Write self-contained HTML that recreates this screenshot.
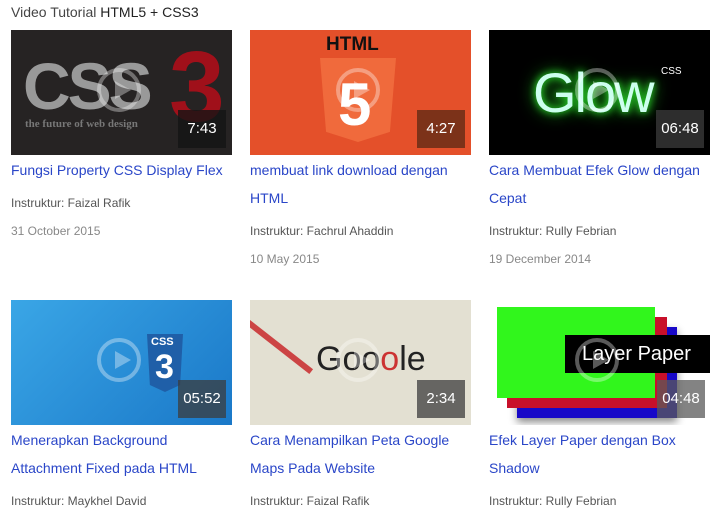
<!DOCTYPE html>
<html><head><style>
body{margin:0;background:#fff;font-family:"Liberation Sans",sans-serif;width:721px;height:519px;overflow:hidden;position:relative}
.h{position:absolute;left:11px;top:4px;font-size:14px;color:#444}
.c{position:absolute;width:221px}
.t{position:relative;width:221px;height:125px;overflow:hidden}
.d{position:absolute;right:6px;bottom:7px;width:48px;height:38px;background:rgba(60,60,60,.75);color:#fff;font-size:15px;text-align:center;line-height:38px}
.p{position:absolute;left:86px;top:38px;width:44px;height:44px;border:4px solid rgba(255,255,255,.35);border-radius:50%;box-sizing:border-box}
.p:after{content:"";position:absolute;left:14px;top:9px;border-left:16px solid rgba(255,255,255,.35);border-top:9px solid transparent;border-bottom:9px solid transparent}
.ti{font-size:14px;color:#2a46c8;line-height:28px;margin-top:1px}
.i{font-size:12px;color:#555;margin-top:5px;line-height:28px}
.dt{font-size:12px;color:#888;line-height:28px}
</style></head><body>
<div class="h">Video Tutorial <span style="color:#222">HTML5 + CSS3</span></div>

<div class="c" style="left:11px;top:30px">
<div class="t" style="background:#262323">
<div style="position:absolute;left:12px;top:18px;font:bold 66px 'Liberation Sans',sans-serif;color:#999;letter-spacing:-3px">CSS</div>
<div style="position:absolute;left:158px;top:0px;font:bold 100px 'Liberation Sans',sans-serif;color:#a0101a">3</div>
<div style="position:absolute;left:14px;top:88px;font:bold 11px 'Liberation Serif',serif;color:#777">the future of web design</div>
<div class="p"></div><div class="d" style="background:rgba(20,20,20,.8)">7:43</div></div>
<div class="ti">Fungsi Property CSS Display Flex</div>
<div class="i">Instruktur: Faizal Rafik</div><div class="dt">31 October 2015</div></div>

<div class="c" style="left:250px;top:30px">
<div class="t" style="background:#e4502a">
<div style="position:absolute;left:76px;top:4px;font:bold 19px 'Liberation Sans',sans-serif;color:#111">HTML</div>
<div style="position:absolute;left:70px;top:28px;width:76px;height:84px;background:#f06a3c;clip-path:polygon(0 0,100% 0,92% 88%,50% 100%,8% 88%)"></div>
<div style="position:absolute;left:88px;top:40px;font:bold 60px 'Liberation Sans',sans-serif;color:#fff">5</div>
<div class="p"></div><div class="d" style="background:rgba(90,40,20,.75)">4:27</div></div>
<div class="ti">membuat link download dengan HTML</div>
<div class="i">Instruktur: Fachrul Ahaddin</div><div class="dt">10 May 2015</div></div>

<div class="c" style="left:489px;top:30px">
<div class="t" style="background:#000">
<div style="position:absolute;left:44px;top:30px;font:56px 'Liberation Sans',sans-serif;color:#cfe;text-shadow:0 0 8px #3f3,0 0 16px #2c2;letter-spacing:-2px">Glow</div>
<div style="position:absolute;left:172px;top:36px;font-size:10px;color:#fff">CSS</div>
<div class="p"></div><div class="d">06:48</div></div>
<div class="ti">Cara Membuat Efek Glow dengan Cepat</div>
<div class="i">Instruktur: Rully Febrian</div><div class="dt">19 December 2014</div></div>

<div class="c" style="left:11px;top:300px">
<div class="t" style="background:linear-gradient(135deg,#3aa6e6,#1a78c8)">
<div style="position:absolute;left:136px;top:34px;width:36px;height:58px;background:#1f5fa8;clip-path:polygon(0 0,100% 0,92% 88%,50% 100%,8% 88%)"></div>
<div style="position:absolute;left:140px;top:36px;font:bold 11px sans-serif;color:#fff">CSS</div>
<div style="position:absolute;left:144px;top:48px;font:bold 34px sans-serif;color:#fff">3</div>
<div class="p"></div><div class="d">05:52</div></div>
<div class="ti">Menerapkan Background Attachment Fixed pada HTML</div>
<div class="i">Instruktur: Maykhel David</div></div>

<div class="c" style="left:250px;top:300px">
<div class="t" style="background:#e3e0d2">
<div style="position:absolute;left:0;top:20px;width:80px;height:6px;background:#c44;transform:rotate(38deg);transform-origin:0 0"></div>
<div style="position:absolute;left:66px;top:40px;font:34px 'Liberation Sans',sans-serif;color:#222">Goo<span style="color:#c33">o</span>le</div>
<div class="p"></div><div class="d">2:34</div></div>
<div class="ti">Cara Menampilkan Peta Google Maps Pada Website</div>
<div class="i">Instruktur: Faizal Rafik</div></div>

<div class="c" style="left:489px;top:300px">
<div class="t" style="background:#fff">
<div style="position:absolute;left:28px;top:27px;width:160px;height:91px;background:#1808c8;box-shadow:0 4px 8px #888"></div>
<div style="position:absolute;left:18px;top:17px;width:160px;height:91px;background:#c8102a"></div>
<div style="position:absolute;left:8px;top:7px;width:158px;height:91px;background:#31f61c"></div>
<div style="position:absolute;left:76px;top:35px;width:145px;height:38px;background:#000;color:#fff;font-size:20px;line-height:38px;padding-left:17px;box-sizing:border-box">Layer Paper</div>
<div class="p"></div><div class="d" style="right:5px;background:rgba(90,90,90,.75)">04:48</div></div>
<div class="ti">Efek Layer Paper dengan Box Shadow</div>
<div class="i">Instruktur: Rully Febrian</div></div>
</body></html>
